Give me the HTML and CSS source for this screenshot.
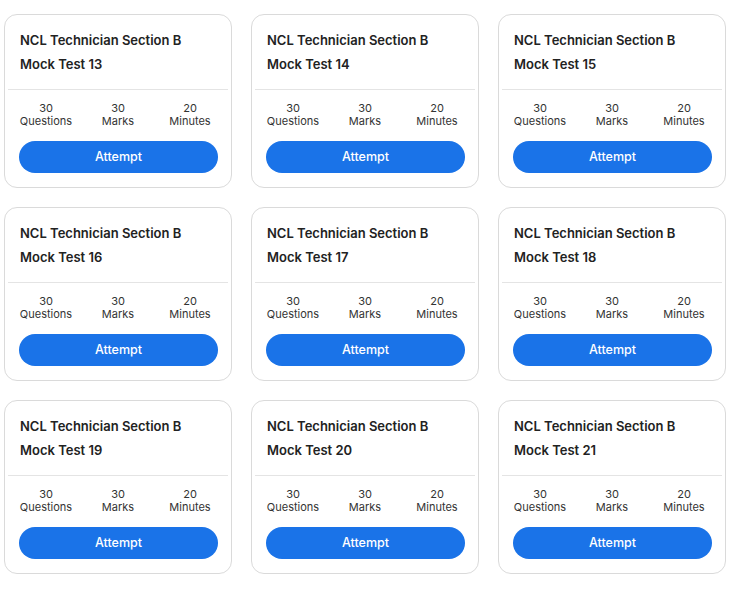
FILE: index.html
```html
<!DOCTYPE html>
<html lang="en">
<head>
<meta charset="utf-8">
<title>Mock Tests</title>
<link rel="stylesheet" href="styles.css">
</head>
<body>
<div class="grid">
  <div class="card"><div class="title">NCL Technician Section B<br>Mock Test 13</div><div class="divider"></div><div class="stats"><div class="stat"><span>30</span><span>Questions</span></div><div class="stat"><span>30</span><span>Marks</span></div><div class="stat"><span>20</span><span>Minutes</span></div></div><button class="btn">Attempt</button></div>
  <div class="card"><div class="title">NCL Technician Section B<br>Mock Test 14</div><div class="divider"></div><div class="stats"><div class="stat"><span>30</span><span>Questions</span></div><div class="stat"><span>30</span><span>Marks</span></div><div class="stat"><span>20</span><span>Minutes</span></div></div><button class="btn">Attempt</button></div>
  <div class="card"><div class="title">NCL Technician Section B<br>Mock Test 15</div><div class="divider"></div><div class="stats"><div class="stat"><span>30</span><span>Questions</span></div><div class="stat"><span>30</span><span>Marks</span></div><div class="stat"><span>20</span><span>Minutes</span></div></div><button class="btn">Attempt</button></div>
  <div class="card"><div class="title">NCL Technician Section B<br>Mock Test 16</div><div class="divider"></div><div class="stats"><div class="stat"><span>30</span><span>Questions</span></div><div class="stat"><span>30</span><span>Marks</span></div><div class="stat"><span>20</span><span>Minutes</span></div></div><button class="btn">Attempt</button></div>
  <div class="card"><div class="title">NCL Technician Section B<br>Mock Test 17</div><div class="divider"></div><div class="stats"><div class="stat"><span>30</span><span>Questions</span></div><div class="stat"><span>30</span><span>Marks</span></div><div class="stat"><span>20</span><span>Minutes</span></div></div><button class="btn">Attempt</button></div>
  <div class="card"><div class="title">NCL Technician Section B<br>Mock Test 18</div><div class="divider"></div><div class="stats"><div class="stat"><span>30</span><span>Questions</span></div><div class="stat"><span>30</span><span>Marks</span></div><div class="stat"><span>20</span><span>Minutes</span></div></div><button class="btn">Attempt</button></div>
  <div class="card"><div class="title">NCL Technician Section B<br>Mock Test 19</div><div class="divider"></div><div class="stats"><div class="stat"><span>30</span><span>Questions</span></div><div class="stat"><span>30</span><span>Marks</span></div><div class="stat"><span>20</span><span>Minutes</span></div></div><button class="btn">Attempt</button></div>
  <div class="card"><div class="title">NCL Technician Section B<br>Mock Test 20</div><div class="divider"></div><div class="stats"><div class="stat"><span>30</span><span>Questions</span></div><div class="stat"><span>30</span><span>Marks</span></div><div class="stat"><span>20</span><span>Minutes</span></div></div><button class="btn">Attempt</button></div>
  <div class="card"><div class="title">NCL Technician Section B<br>Mock Test 21</div><div class="divider"></div><div class="stats"><div class="stat"><span>30</span><span>Questions</span></div><div class="stat"><span>30</span><span>Marks</span></div><div class="stat"><span>20</span><span>Minutes</span></div></div><button class="btn">Attempt</button></div>
</div>
</body>
</html>
```
FILE: styles.css
```css
* { box-sizing: border-box; }
body {
  margin: 0;
  background: #ffffff;
  font-family: Inter, "Noto Sans", sans-serif;
  color: #222;
}
.grid {
  display: grid;
  grid-template-columns: repeat(3, 228px);
  column-gap: 19px;
  row-gap: 19px;
  padding: 14px 0 0 4px;
}
.card {
  height: 174px;
  border: 1px solid #dadada;
  border-radius: 13px;
  background: #fff;
  display: flex;
  flex-direction: column;
}
.title {
  padding: 13px 10px 0 15px;
  font-size: 13px;
  font-weight: 600;
  line-height: 24px;
  color: #222;
  height: 61px;
}
.divider {
  height: 1px;
  background: #e4e4e4;
  margin: 13px 3px 0 3px;
}
.stats {
  display: grid;
  grid-template-columns: repeat(3, 72px);
  justify-content: center;
  padding-top: 12px;
  font-size: 11px;
  line-height: 13px;
  color: #333;
}
.stat {
  display: flex;
  flex-direction: column;
  align-items: center;
}
.btn {
  margin: 13px 13px 0 14px;
  height: 32px;
  border: none;
  border-radius: 16px;
  background: #1a73e8;
  color: #fff;
  font-family: Inter, "Noto Sans", sans-serif;
  font-size: 12.5px;
  font-weight: 500;
  padding: 0 0 2px 0;
}
```
